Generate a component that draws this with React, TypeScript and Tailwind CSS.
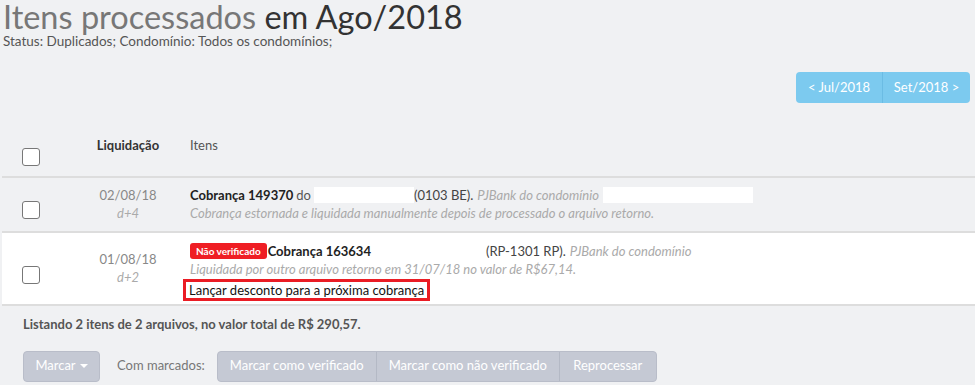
export default function App() {
  return (
    <div className="min-h-[385px] w-[975px] overflow-hidden bg-[#f0f1f3] text-[13px] text-[#333]" style={{ fontFamily: "Lato, 'Noto Sans', sans-serif" }}>
      <div className="pl-[3px]">
        <h1 className="text-[32.5px] leading-[34px] text-[#777]">
          Itens processados <span className="text-[#333]">em Ago/2018</span>
        </h1>
        <p className="text-[13.5px] leading-[14px] text-[#555]">Status: Duplicados; Condomínio: Todos os condomínios;</p>
      </div>

      <div className="flex justify-end pr-[5px] mt-[24px]">
        <div className="flex h-[31px] rounded-[4px] overflow-hidden bg-[#7ccaef] text-white text-[13px]">
          <button className="w-[87px] border-r border-[#6bbce4]">&lt; Jul/2018</button>
          <button className="w-[87px]">Set/2018 &gt;</button>
        </div>
      </div>

      <div className="ml-[2px] mt-[24px]">
        <div className="flex h-[51px] border-b-2 border-[#dddddd]">
          <div className="w-[78px] pl-[20px] pt-[21px]">
            <Checkbox />
          </div>
          <div className="w-[96px] text-center pt-[9px] font-bold text-[#333]">Liquidação</div>
          <div className="pl-[14px] pt-[9px] text-[#555]">Itens</div>
        </div>

        <div className="flex h-[55px] border-b-2 border-[#dddddd]">
          <div className="w-[78px] pl-[20px] pt-[23px]">
            <Checkbox />
          </div>
          <div className="w-[96px] text-center pt-[8px] leading-[18px] text-[#888]">
            <div>02/08/18</div>
            <div className="italic text-[#aaa]">d+4</div>
          </div>
          <div className="pl-[14px] pt-[8px] leading-[18px]">
            <div className="flex items-center">
              <span className="font-bold text-[#222]">Cobrança 149370</span>
              <span className="ml-[3px] text-[#555]">do</span>
              <span className="ml-[3px] inline-block h-[16px] w-[100px] bg-white" />
              <span className="text-[#444]">(0103 BE).</span>
              <span className="ml-[4px] italic text-[#aaa]">PJBank do condomínio</span>
              <span className="ml-[4px] inline-block h-[16px] w-[150px] bg-white" />
            </div>
            <div className="italic text-[#aaa]">Cobrança estornada e liquidada manualmente depois de processado o arquivo retorno.</div>
          </div>
        </div>

        <div className="flex h-[73px] bg-white border-b-2 border-[#dddddd]">
          <div className="w-[78px] pl-[20px] pt-[33px]">
            <Checkbox />
          </div>
          <div className="w-[96px] text-center pt-[17px] leading-[18px] text-[#888]">
            <div>01/08/18</div>
            <div className="italic text-[#aaa]">d+2</div>
          </div>
          <div className="pl-[14px] pt-[9px] leading-[18px]">
            <div className="flex items-center">
              <span className="rounded-[3px] bg-[#ef1e24] px-[6px] text-[10px] leading-[16px] font-bold text-white">Não verificado</span>
              <span className="ml-[1px] font-bold text-[#222]">Cobrança 163634</span>
              <span className="ml-[115px] text-[#444]">(RP-1301 RP).</span>
              <span className="ml-[4px] italic text-[#aaa]">PJBank do condomínio</span>
            </div>
            <div className="italic text-[#aaa]">Liquidada por outro arquivo retorno em 31/07/18 no valor de R$67,14.</div>
            <div className="-ml-[7px] mt-[1px] inline-block border-[3px] border-[#ea1c24] px-[3px] leading-[16px] text-[#111]">
              Lançar desconto para a próxima cobrança
            </div>
          </div>
        </div>
      </div>

      <p className="pl-[23px] pt-[9px] text-[13px] font-bold text-[#555]">Listando 2 itens de 2 arquivos, no valor total de R$ 290,57.</p>

      <div className="flex items-center pl-[23px] mt-[16px]">
        <button className="flex h-[31px] w-[77px] justify-center items-center rounded-[4px] border border-[#b9bdc9] bg-[#c5c9d4] text-[13px] text-white">
          Marcar
          <span className="ml-[4px] inline-block border-x-[4px] border-t-[4px] border-x-transparent border-t-white" />
        </button>
        <span className="ml-[17px] text-[13px] text-[#777]">Com marcados:</span>
        <div className="ml-[12px] flex h-[31px] overflow-hidden rounded-[4px] border border-[#b9bdc9] bg-[#c5c9d4] text-[13px] text-white">
          <button className="w-[159px] border-r border-[#b4b9c5]">Marcar como verificado</button>
          <button className="w-[183px] border-r border-[#b4b9c5]">Marcar como não verificado</button>
          <button className="w-[96px]">Reprocessar</button>
        </div>
      </div>
    </div>
  );
}

function Checkbox() {
  return <div className="h-[18px] w-[18px] rounded-[3px] border border-[#777] bg-white" />;
}
